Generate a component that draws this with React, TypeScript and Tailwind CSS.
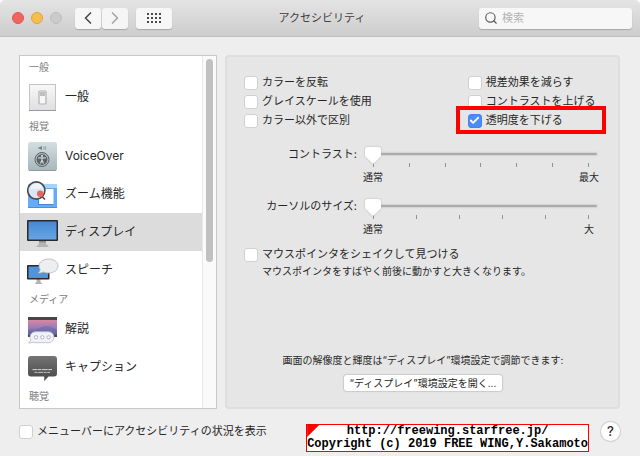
import React, { useState } from 'react';
import { ChevronLeft, ChevronRight, Search, Check } from 'lucide-react';

interface SidebarItem {
  id: string;
  label: string;
  icon: React.ReactNode;
}

interface SidebarSection {
  title: string;
  items: SidebarItem[];
}

const GeneralIcon = () => (
  <svg viewBox="0 0 32 32" className="h-8 w-8 shrink-0">
    <defs>
      <linearGradient id="plate" x1="0" y1="0" x2="0" y2="1">
        <stop offset="0" stopColor="#f8f8f8" />
        <stop offset="1" stopColor="#dfdfe1" />
      </linearGradient>
    </defs>
    <rect x="2.5" y="3.5" width="26" height="26" fill="url(#plate)" stroke="#c4c4c4" />
    <path d="M2 29.5h27" stroke="#9a9a9c" />
    <rect x="12" y="10" width="7" height="13" rx="1" fill="#f7f7f7" stroke="#b0b0b2" strokeWidth="1.2" />
    <rect x="13" y="11" width="5" height="4" fill="#c0c0c2" />
  </svg>
);

const VoiceOverIcon = () => (
  <svg viewBox="0 0 32 32" className="h-8 w-8 shrink-0">
    <defs>
      <linearGradient id="voice" x1="0" y1="0" x2="0" y2="1">
        <stop offset="0" stopColor="#d3dfe2" />
        <stop offset="1" stopColor="#a7b6ba" />
      </linearGradient>
    </defs>
    <rect x="1" y="2" width="29" height="29" rx="2.5" fill="url(#voice)" />
    <path d="M2 30.5h27" stroke="#929c9f" />
    <path d="M11.5 7.2h1.6l1.7-1.4v4.4l-1.700-1.400h-1.600z" fill="#6d777a" />
    <path d="M16.500 6.500q1.200 1.500 0 3M18 6q1.600 2 0 4" fill="none" stroke="#8d989b" strokeWidth=".8" />
    <circle cx="15" cy="19.500" r="7" fill="#aebbbf" stroke="#5b6366" strokeWidth="1" />
    <circle cx="15" cy="19.500" r="5.400" fill="#5b6366" />
    <circle cx="15" cy="15.900" r="1.100" fill="#cfd8db" />
    <path d="M11.200 17.800h7.600M15 17.500v3M15 20l-1.500 3.400M15 20l1.500 3.400" stroke="#cfd8db" strokeWidth="1.200" />
  </svg>
);

const ZoomIcon = () => (
  <svg viewBox="0 0 32 32" className="h-8 w-8 shrink-0">
    <rect x="1" y="6" width="29" height="24" rx="1.5" fill="#64adf6" />
    <path d="M2 6h27a1 1 0 0 1 1 1v3H1V7a1 1 0 0 1 1-1z" fill="#a4d3fb" />
    <path d="M1 29.5h29" stroke="#4a8fd8" />
    <rect x="11" y="12" width="15" height="15" fill="#3f86d3" />
    <rect x="12" y="11" width="14.5" height="15" fill="#fff" />
    <circle cx="9.3" cy="12.5" r="8.6" fill="#d9e6f3" stroke="#4b4b4d" strokeWidth="1.6" />
    <path d="M3.5 11q1-5 6-5.500t6 5z" fill="#eff4f9" />
    <circle cx="13.2" cy="15.8" r="3.2" fill="#e8665f" />
    <path d="M15.500 19l2.500 2.500" stroke="#4b4b4d" strokeWidth="1.600" />
  </svg>
);

const DisplayIcon = () => (
  <svg viewBox="0 0 32 32" className="h-8 w-8 shrink-0">
    <defs>
      <linearGradient id="screen" x1="0" y1="0" x2="0" y2="1">
        <stop offset="0" stopColor="#4788d2" />
        <stop offset="1" stopColor="#66a6e6" />
      </linearGradient>
    </defs>
    <path d="M12 25h7v3l2.5 2.2v.8h-12v-.8L12 28z" fill="#b4b4b4" />
    <path d="M12 25h7v1.5h-7z" fill="#8b8b8b" />
    <rect x="0" y="4" width="31" height="21" rx="1" fill="#29292b" />
    <rect x="1.5" y="5.5" width="28" height="18" fill="url(#screen)" />
  </svg>
);

const SpeechIcon = () => (
  <svg viewBox="0 0 32 32" className="h-8 w-8 shrink-0">
    <path d="M9.5 25h4v3l1.8 1.4v.6H8v-.6L9.5 28z" fill="#b4b4b4" />
    <rect x="0" y="11" width="22.5" height="14.5" rx="1" fill="#29292b" />
    <rect x="1.5" y="12.5" width="19.5" height="11.5" fill="#5294dc" />
    <path d="M21.5 5c5.5 0 9.5 3 9.5 7s-4 7-9.500 7c-2 0-3.800-.4-5.200-1.100-1.300.8-3.300 1.300-5.300.9 1.400-.9 2-2 2.200-3.400-.8-1.100-1.200-2.200-1.200-3.400 0-4 4-7 9.500-7z" fill="#eceef0" stroke="#b2b5b9" strokeWidth=".8" />
  </svg>
);

const DescriptionIcon = () => (
  <svg viewBox="0 0 32 32" className="h-8 w-8 shrink-0">
    <defs>
      <linearGradient id="dusk" x1="0" y1="0" x2="0" y2="1">
        <stop offset="0" stopColor="#d888a4" />
        <stop offset=".5" stopColor="#9f7bb4" />
        <stop offset="1" stopColor="#5766a5" />
      </linearGradient>
    </defs>
    <rect x="1" y="4" width="29" height="20" fill="#4a4548" />
    <rect x="1" y="7" width="29" height="14.500" fill="url(#dusk)" />
    <path d="M1 18q8-1 14-4t15 3v4.500H1z" fill="#6368ab" opacity=".5" />
    <path d="M8.500 18.700h13a5.500 5.500 0 0 1 0 11h-13q-1.500 0-2.500-.5-2 1-4.500.6 2-1 2.300-2.600-.8-1.300-.8-3a5.500 5.500 0 0 1 5.500-5.500z" fill="#f1f2f8" stroke="#b3b6cb" strokeWidth=".8" />
    <circle cx="9" cy="24.300" r="1.700" fill="#fff" stroke="#a9abb8" strokeWidth=".9" />
    <circle cx="15.300" cy="24.300" r="1.700" fill="#fff" stroke="#a9abb8" strokeWidth=".9" />
    <circle cx="21.600" cy="24.300" r="1.700" fill="#fff" stroke="#a9abb8" strokeWidth=".9" />
  </svg>
);

const CaptionIcon = () => (
  <svg viewBox="0 0 32 32" className="h-8 w-8 shrink-0">
    <defs>
      <linearGradient id="caption" x1="0" y1="0" x2="0" y2="1">
        <stop offset="0" stopColor="#747474" />
        <stop offset="1" stopColor="#464646" />
      </linearGradient>
    </defs>
    <path d="M4 5h23a3 3 0 0 1 3 3v14.500a3 3 0 0 1-3 3h-5.500L17.200 30v-4.500H4a3 3 0 0 1-3-3V8a3 3 0 0 1 3-3z" fill="url(#caption)" />
    <path d="M5.500 18.600h19.500" stroke="#d8d8d8" strokeDasharray="5 .6 3 .6 6 .6" />
    <path d="M7.500 21.400h15.500" stroke="#c4c4c4" strokeDasharray="3 .6 5 .6" />
  </svg>
);

const sections: SidebarSection[] = [
  { title: '一般', items: [{ id: 'general', label: '一般', icon: <GeneralIcon /> }] },
  {
    title: '視覚',
    items: [
      { id: 'voiceover', label: 'VoiceOver', icon: <VoiceOverIcon /> },
      { id: 'zoom', label: 'ズーム機能', icon: <ZoomIcon /> },
      { id: 'display', label: 'ディスプレイ', icon: <DisplayIcon /> },
      { id: 'speech', label: 'スピーチ', icon: <SpeechIcon /> }
    ]
  },
  {
    title: 'メディア',
    items: [
      { id: 'description', label: '解説', icon: <DescriptionIcon /> },
      { id: 'caption', label: 'キャプション', icon: <CaptionIcon /> }
    ]
  },
  { title: '聴覚', items: [] }
];

interface CheckboxProps {
  label: string;
  defaultChecked?: boolean;
}

const Checkbox = ({ label, defaultChecked = false }: CheckboxProps) => (
  <label className="flex h-[19px] items-center gap-1 whitespace-nowrap">
    <span className="grid h-[14px] w-[14px] shrink-0 place-items-center">
      <input
        type="checkbox"
        defaultChecked={defaultChecked}
        className="peer col-start-1 row-start-1 h-[14px] w-[14px] appearance-none rounded-[3px] border border-[#d0d0d0] bg-white checked:border-[#4484ee] checked:bg-[#4b8bf4]"
      />
      <Check className="pointer-events-none invisible col-start-1 row-start-1 h-[11px] w-[11px] text-white peer-checked:visible" strokeWidth={4} />
    </span>
    {label}
  </label>
);

interface ScaleSliderProps {
  id: string;
  label: string;
  ticks: number;
  min: string;
  max: string;
}

const ScaleSlider = ({ id, label, ticks, min, max }: ScaleSliderProps) => (
  <div className="flex gap-2 pr-[5px]">
    <label htmlFor={id} className="w-[113px] shrink-0 text-right leading-[18px]">{label}</label>
    <div className="min-w-0 flex-1">
      <input
        id={id}
        type="range"
        min={0}
        max={ticks - 1}
        defaultValue={0}
        className="block h-[18px] w-full appearance-none bg-transparent drop-shadow-[0_0_1px_rgba(0,0,0,0.2)] [&::-webkit-slider-runnable-track]:h-[2px] [&::-webkit-slider-runnable-track]:rounded-full [&::-webkit-slider-runnable-track]:bg-[#acaaaa] [&::-webkit-slider-thumb]:-mt-[6px] [&::-webkit-slider-thumb]:h-[17px] [&::-webkit-slider-thumb]:w-4 [&::-webkit-slider-thumb]:appearance-none [&::-webkit-slider-thumb]:rounded-[3px] [&::-webkit-slider-thumb]:bg-white [&::-webkit-slider-thumb]:[clip-path:polygon(0_0,100%_0,100%_55%,50%_100%,0_55%)]"
      />
      <div className="flex h-1 justify-between px-2">
        {Array.from({ length: ticks }, (_, i) => (
          <span key={i} className="w-px bg-[#929292]" />
        ))}
      </div>
      <div className="-mx-[6px] mt-[2px] flex justify-between text-[10px] leading-4">
        <span className="w-7 text-center">{min}</span>
        <span className="w-7 text-center">{max}</span>
      </div>
    </div>
  </div>
);

export default function App() {
  const [selected, setSelected] = useState('display');

  return (
    <div className="flex min-h-screen flex-col overflow-hidden rounded-t-[5px] bg-[#eeeeee] font-['Inter','Noto_Sans_CJK_JP',sans-serif] text-[11px] text-[#262626]">
      {/* Title bar */}
      <header className="grid h-[37px] grid-cols-[1fr_auto_1fr] items-center border-b border-[#bfbfbf] bg-linear-to-b from-[#e4e4e4] to-[#cdcdcd] pr-2 pl-3">
        <div className="flex items-center gap-2">
          <div className="mr-[5px] flex gap-[7px]">
            <button aria-label="閉じる" className="h-3 w-3 rounded-full border border-[#e0564f] bg-[#f0665f]" />
            <button aria-label="しまう" className="h-3 w-3 rounded-full border border-[#e0a33c] bg-[#f8bd4f]" />
            <button aria-label="拡大" disabled className="h-3 w-3 rounded-full border border-[#bdbdbd] bg-[#cbcbcb]" />
          </div>
          <div className="flex gap-px">
            <button aria-label="戻る" className="grid h-[21px] w-[26px] place-items-center rounded-[3px] bg-[#f7f7f7] text-[#4a4a4a] shadow-[0_1px_1px_rgba(0,0,0,0.2)]">
              <ChevronLeft className="h-5 w-5" />
            </button>
            <button aria-label="進む" className="grid h-[21px] w-[26px] place-items-center rounded-[3px] bg-[#f5f5f5] text-[#a6a6a6] shadow-[0_1px_1px_rgba(0,0,0,0.2)]">
              <ChevronRight className="h-5 w-5" />
            </button>
          </div>
          <button aria-label="すべてを表示" className="grid h-[21px] w-9 place-items-center rounded-[3px] bg-[#f7f7f7] shadow-[0_1px_1px_rgba(0,0,0,0.2)]">
            <svg viewBox="0 0 14 10" className="h-[10px] w-[14px]" fill="#4a4a4a">
              {[0, 4, 8].map((y) => [0, 4, 8, 12].map((x) => (
                <rect key={`${x}-${y}`} x={x} y={y} width="2" height="2" />
              )))}
            </svg>
          </button>
        </div>
        <h1 className="text-[#3f3f3f]">アクセシビリティ</h1>
        <label className="flex h-[21px] w-[153px] items-center gap-1 justify-self-end rounded-[3px] bg-[#f7f7f7] px-[5px] shadow-[0_1px_1px_rgba(0,0,0,0.2)]">
          <Search className="h-[14px] w-[14px] shrink-0 text-[#5a5a5a]" />
          <input type="search" aria-label="検索" placeholder="検索" className="min-w-0 flex-1 bg-transparent outline-none placeholder:text-[#b4b4b4]" />
        </label>
      </header>

      <main className="flex flex-1 gap-2 pt-[18px] pr-5 pl-[19px]">
        {/* Category list */}
        <nav className="flex w-[198px] shrink-0 border border-[#c8c8c8] bg-white">
          <div className="min-w-0 flex-1 py-px">
            {sections.map((section) => (
              <section key={section.title}>
                <h2 className="h-[21px] pl-[9px] text-[10px] leading-[21px] text-[#7c7c7c]">{section.title}</h2>
                {section.items.map((item) => (
                  <button
                    key={item.id}
                    onClick={() => setSelected(item.id)}
                    className={`flex h-[38px] w-full items-center gap-[6px] pl-[7px] text-left text-[12px] ${selected === item.id ? 'bg-[#dcdcdc]' : ''}`}
                  >
                    {item.icon}
                    {item.label}
                  </button>
                ))}
              </section>
            ))}
          </div>
          <div className="w-[14px] shrink-0 border-l border-[#e8e8e8] bg-[#fafafa] px-[3px] pt-[3px]">
            <div className="h-[203px] rounded-full bg-[#c1c1c1]" />
          </div>
        </nav>

        {/* Display settings */}
        <div className="flex min-w-0 flex-1 flex-col rounded-[4px] border-2 border-[#dedede] bg-[#e6e6e6] pt-4 pr-4 pb-4 pl-[17px]">
          <div className="grid grid-cols-[5fr_3fr]">
            <div>
              <Checkbox label="カラーを反転" />
              <Checkbox label="グレイスケールを使用" />
              <Checkbox label="カラー以外で区別" />
            </div>
            <div>
              <Checkbox label="視差効果を減らす" />
              <Checkbox label="コントラストを上げる" />
              <div className="relative">
                <Checkbox label="透明度を下げる" defaultChecked />
                <span className="pointer-events-none absolute -top-[5px] -right-1 -bottom-1 -left-3 border-4 border-[#ff0000]" />
              </div>
            </div>
          </div>

          <div className="mt-[15px] flex flex-col gap-3">
            <ScaleSlider id="contrast" label="コントラスト:" ticks={7} min="通常" max="最大" />
            <ScaleSlider id="cursor-size" label="カーソルのサイズ:" ticks={6} min="通常" max="大" />
          </div>

          <div className="mt-2">
            <Checkbox label="マウスポインタをシェイクして見つける" />
            <p className="pl-[18px] text-[10px] leading-[14px]">マウスポインタをすばやく前後に動かすと大きくなります。</p>
          </div>

          <div className="mt-auto flex flex-col items-center text-[10px]">
            <p className="leading-[14px]">画面の解像度と輝度は“ディスプレイ”環境設定で調節できます:</p>
            <button className="mt-2 h-4 rounded-[3px] bg-white px-[6px] leading-4 shadow-[0_0_1px_1px_rgba(0,0,0,0.12)]">“ディスプレイ”環境設定を開く...</button>
          </div>
        </div>
      </main>

      <footer className="flex items-start pt-[13px] pr-5 pb-1 pl-[19px]">
        <Checkbox label="メニューバーにアクセシビリティの状況を表示" />
        <div className="relative mt-[2px] ml-auto border border-[#ff0000] bg-white text-center font-['Liberation_Mono',monospace] text-[12px] leading-[13px] font-bold whitespace-nowrap text-black">
          <span className="absolute top-0 left-0 h-3 w-3 bg-[#ff0000] [clip-path:polygon(0_0,100%_0,0_100%)]" />
          <p>http://freewing.starfree.jp/</p>
          <p>Copyright (c) 2019 FREE WING,Y.Sakamoto</p>
        </div>
        <button aria-label="ヘルプ" className="ml-3 h-[19px] w-[19px] shrink-0 rounded-full bg-white text-[13px] leading-[19px] font-medium shadow-[0_0_1px_1px_rgba(0,0,0,0.15)]">?</button>
      </footer>
    </div>
  );
}
